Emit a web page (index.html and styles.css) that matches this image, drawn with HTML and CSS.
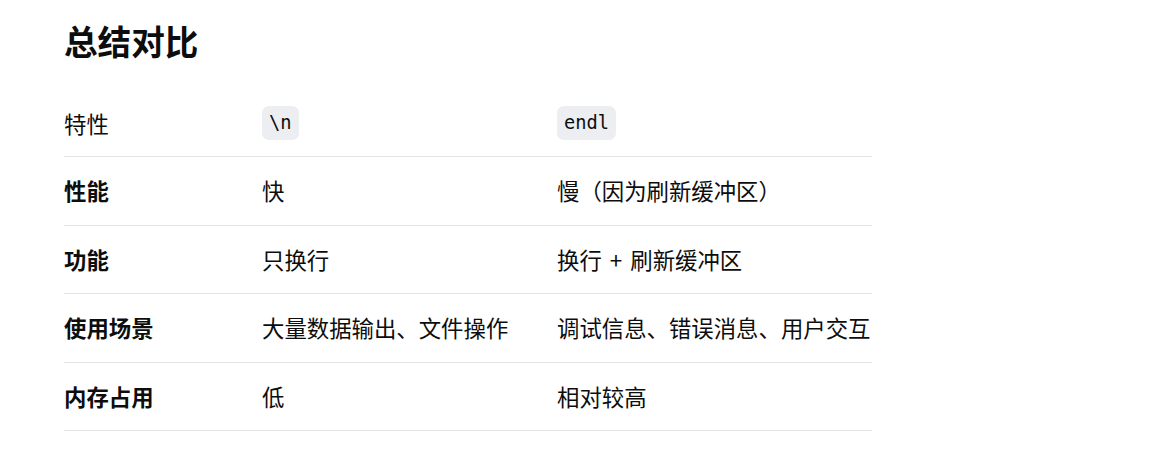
FILE: index.html
```html
<!DOCTYPE html>
<html lang="zh-CN">
<head>
<meta charset="utf-8">
<title>总结对比</title>
<link rel="stylesheet" href="styles.css">
</head>
<body>
<main class="page">
  <h1 class="title">总结对比</h1>
  <table class="compare">
    <colgroup>
      <col class="c1"><col class="c2"><col class="c3">
    </colgroup>
    <thead>
      <tr>
        <th>特性</th>
        <th><code class="code">\n</code></th>
        <th><code class="code">endl</code></th>
      </tr>
    </thead>
    <tbody>
      <tr><td class="key">性能</td><td>快</td><td>慢（因为刷新缓冲区）</td></tr>
      <tr><td class="key">功能</td><td>只换行</td><td class="plus">换行 + 刷新缓冲区</td></tr>
      <tr><td class="key">使用场景</td><td>大量数据输出、文件操作</td><td>调试信息、错误消息、用户交互</td></tr>
      <tr><td class="key">内存占用</td><td>低</td><td>相对较高</td></tr>
    </tbody>
  </table>
</main>
</body>
</html>
```

FILE: styles.css
```css
html, body {
  margin: 0;
  padding: 0;
  background: #ffffff;
}

body {
  font-family: "Noto Sans CJK SC", "Noto Sans", sans-serif;
  color: #0d0d0d;
}

.page {
  padding: 21px 0 0 64px;
}

.title {
  margin: 0;
  font-size: 33.6px;
  line-height: 40px;
  font-weight: 700;
  color: #0d0d0d;
}

.compare {
  margin-top: 27px;
  border-collapse: collapse;
  table-layout: fixed;
  width: 808px;
  font-size: 22.4px;
  line-height: 33.6px;
}

.c1 { width: 198px; }
.c2 { width: 295px; }
.c3 { width: 315px; }

.compare th,
.compare td {
  padding: 17px 0;
  text-align: left;
  vertical-align: middle;
  border-bottom: 1px solid #e3e3e3;
  white-space: nowrap;
  font-weight: 400;
}

.compare th {
  padding: 18px 0 16px;
  line-height: 34px;
}

.compare td.key {
  font-weight: 700;
}

.compare td.plus {
  word-spacing: 3px;
}

.code {
  display: inline-block;
  font-family: "DejaVu Sans Mono", monospace;
  font-size: 18.7px;
  line-height: 26px;
  padding: 4px 7px;
  border-radius: 7px;
  background: #eceef2;
  color: #0d0d0d;
  vertical-align: top;
}
```
